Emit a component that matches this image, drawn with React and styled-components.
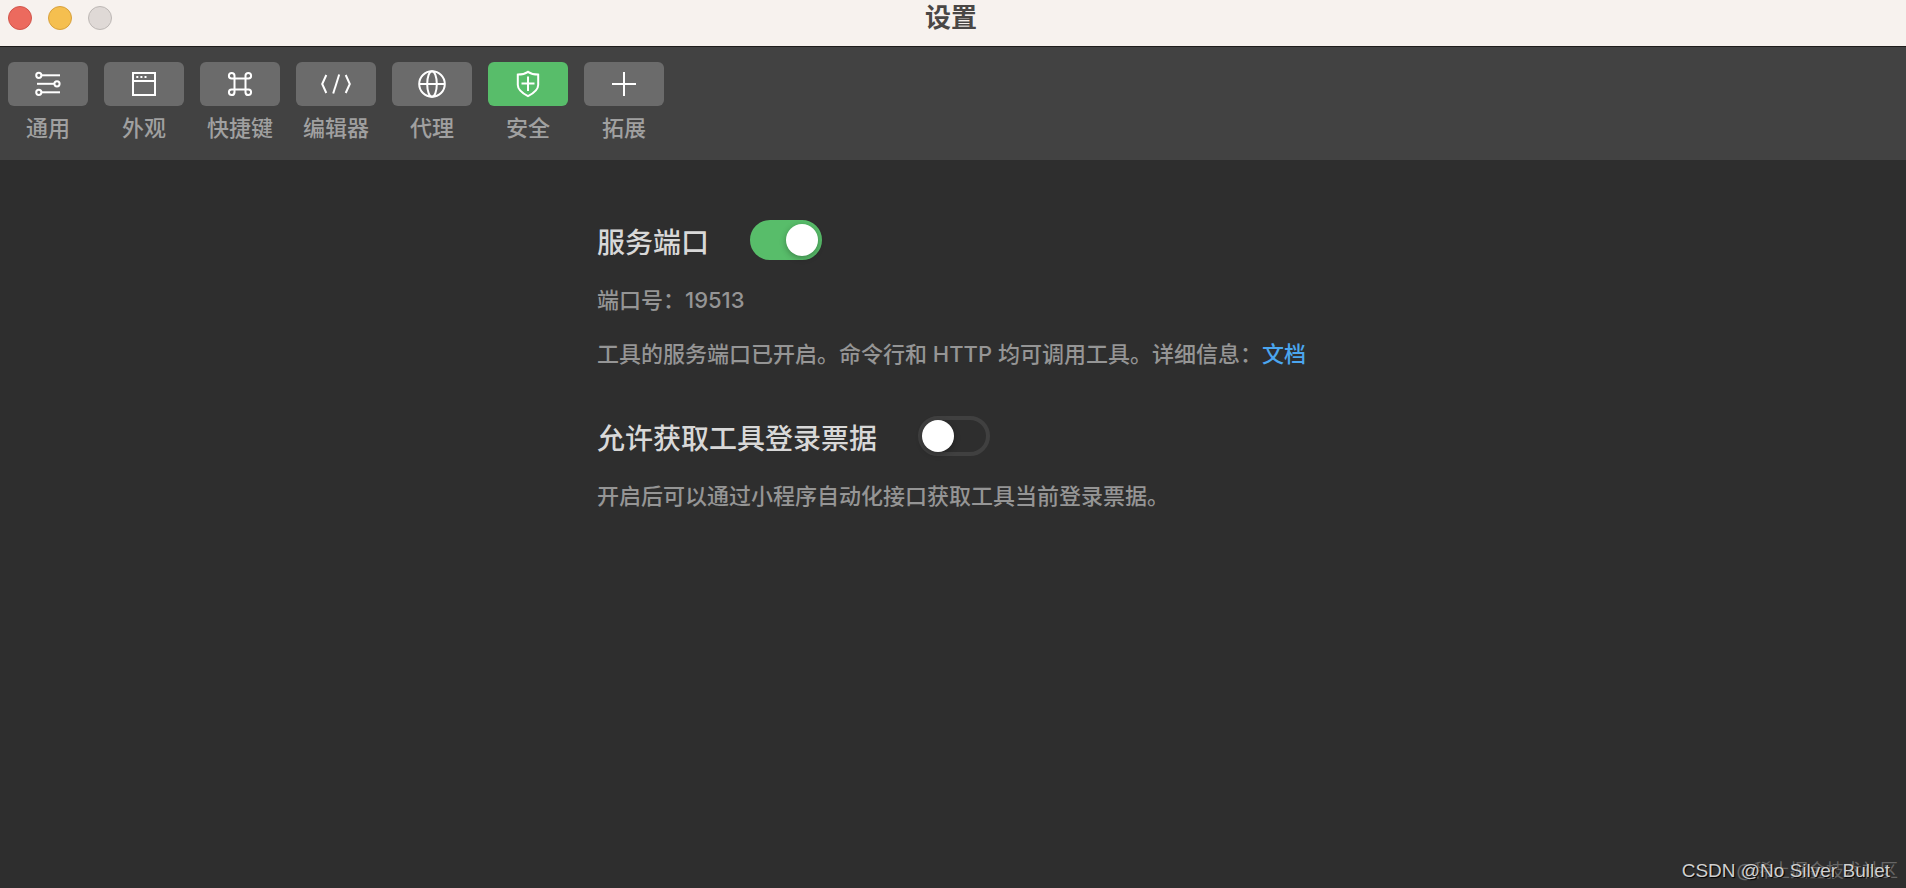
import React, { useState } from 'react'
import styled, { createGlobalStyle } from 'styled-components'

const tabs = [
  { id: 'general', label: '通用' },
  { id: 'appearance', label: '外观' },
  { id: 'shortcuts', label: '快捷键' },
  { id: 'editor', label: '编辑器' },
  { id: 'proxy', label: '代理' },
  { id: 'security', label: '安全' },
  { id: 'extensions', label: '拓展' },
]

const icons = {
  general: (
    <>
      <circle cx="4.8" cy="5.3" r="2.6" />
      <path d="M7.4 5.3H26" />
      <path d="M3 13.8h17.4" />
      <circle cx="23" cy="13.8" r="2.6" />
      <circle cx="4.8" cy="22.3" r="2.6" />
      <path d="M7.4 22.3H26" />
    </>
  ),
  appearance: (
    <>
      <path d="M3 3h22v22H3z" />
      <path d="M3 11h22" />
      <path d="M6.300 7h2M10.400 7h2M14.500 7h2" />
    </>
  ),
  shortcuts: (
    <path d="M8.500 8.500V5.600A2.800 2.800 0 1 0 5.600 8.500h16.800A2.800 2.800 0 1 0 19.500 5.600v16.800a2.800 2.800 0 1 0 2.900-2.900H5.600A2.800 2.800 0 1 0 8.500 22.400z" />
  ),
  editor: (
    <>
      <path d="M4.300 5L.2 14l4.100 9" />
      <path d="M17.200 4.500l-6 19" />
      <path d="M23.700 5l4.100 9-4.100 9" />
    </>
  ),
  proxy: (
    <>
      <circle cx="14" cy="14" r="12.8" />
      <ellipse cx="14" cy="14" rx="4.8" ry="12.8" />
      <path d="M1.2 14h25.6" />
    </>
  ),
  security: (
    <>
      <path d="M14 1.8c-3 2-6.500 2.700-10.200 2.800v10.400c0 5.200 5.300 8.600 10.200 11.200 4.900-2.600 10.200-6 10.200-11.200V4.600C20.500 4.500 17 3.800 14 1.800z" />
      <path d="M14 6.500v14.500M7.500 13.500h13" />
    </>
  ),
  extensions: <path d="M14 2v24M2 14h24" />,
}

const App = () => {
  const [active, setActive] = useState('security')
  const [port, setPort] = useState(true)
  const [ticket, setTicket] = useState(false)

  return (
    <>
      <GlobalStyle />
      <Window>
        <TitleBar>
          <Lights>
            <Light $color="#ec6a5e" $edge="#d2554b" aria-label="关闭" />
            <Light $color="#f5bf4f" $edge="#d8a13c" aria-label="最小化" />
            <Light $color="#dfd9d6" $edge="#bdb8b5" aria-label="缩放" />
          </Lights>
          <h1>设置</h1>
        </TitleBar>

        <Toolbar>
          {tabs.map((tab) => (
            <Tab key={tab.id} $active={tab.id === active} onClick={() => setActive(tab.id)}>
              <span className="icon">
                <svg viewBox="0 0 28 28" aria-hidden="true">{icons[tab.id]}</svg>
              </span>
              {tab.label}
            </Tab>
          ))}
        </Toolbar>

        <Content>
          <Section>
            <SwitchRow>
              <label htmlFor="port">服务端口</label>
              <Switch id="port" checked={port} onChange={(e) => setPort(e.target.checked)} />
            </SwitchRow>
            <p>端口号：19513</p>
            <p>
              工具的服务端口已开启。命令行和 HTTP 均可调用工具。详细信息：<a href="#docs">文档</a>
            </p>
          </Section>
          <Section>
            <SwitchRow>
              <label htmlFor="ticket">允许获取工具登录票据</label>
              <Switch id="ticket" checked={ticket} onChange={(e) => setTicket(e.target.checked)} />
            </SwitchRow>
            <p>开启后可以通过小程序自动化接口获取工具当前登录票据。</p>
          </Section>
        </Content>

        <SiteMark>@稀土掘金技术社区</SiteMark>
        <AuthorMark>CSDN @No Silver Bullet</AuthorMark>
      </Window>
    </>
  )
}

const GlobalStyle = createGlobalStyle`
  * {
    box-sizing: border-box;
  }
  body {
    margin: 0;
    background: #2e2e2e;
    font-family: Inter, 'Noto Sans CJK SC', sans-serif;
    font-weight: 500;
  }
  h1, p {
    margin: 0;
  }
  button {
    padding: 0;
    border: 0;
    background: none;
    font: inherit;
  }
`

const Window = styled.div`
  position: relative;
  min-height: 100vh;
`

const TitleBar = styled.header`
  display: grid;
  grid-template-columns: 1fr auto 1fr;
  height: 47px;
  padding: 0 12px 0 8px;
  background: #f7f2ee;
  border-bottom: 1px solid #1f1c1b;
  h1 {
    padding-top: 2px;
    color: #4a4745;
    font-size: 26px;
    line-height: 32px;
    font-weight: 700;
  }
`

const Lights = styled.div`
  display: flex;
  gap: 16px;
  padding-top: 6px;
`

const Light = styled.button`
  width: 24px;
  height: 24px;
  border-radius: 50%;
  background: ${(props) => props.$color};
  border: 1px solid ${(props) => props.$edge};
`

const Toolbar = styled.nav`
  display: flex;
  gap: 16px;
  height: 113px;
  padding: 15px 8px 0;
  background: #424242;
`

const Tab = styled.button`
  display: flex;
  flex-direction: column;
  align-items: center;
  gap: 6px;
  width: 80px;
  color: #a0a0a0;
  font-size: 22px;
  line-height: 32px;
  white-space: nowrap;
  .icon {
    display: grid;
    place-items: center;
    width: 80px;
    height: 44px;
    border-radius: 6px;
    background: ${(props) => (props.$active ? '#58bd6a' : '#6b6b6b')};
  }
  svg {
    width: 28px;
    height: 28px;
    overflow: visible;
    fill: none;
    stroke: #fff;
    stroke-width: 2;
  }
`

const Content = styled.main`
  display: flex;
  flex-direction: column;
  gap: 46px;
  max-width: 712px;
  margin: 0 auto;
  padding: 60px 0;
`

const Section = styled.section`
  p {
    margin-top: 24px;
    color: #959595;
    font-size: 22px;
    line-height: 32px;
  }
  p + p {
    margin-top: 22px;
  }
  a {
    color: #4ba6ef;
    text-decoration: none;
  }
`

const SwitchRow = styled.div`
  display: flex;
  align-items: center;
  gap: 41px;
  height: 40px;
  label {
    padding-top: 6px;
    color: #d8d8d8;
    font-size: 28px;
    line-height: 34px;
  }
`

const Switch = styled.input.attrs({ type: 'checkbox', role: 'switch' })`
  appearance: none;
  display: flex;
  width: 72px;
  height: 40px;
  margin: 0;
  border: 4px solid #404040;
  border-radius: 20px;
  &::before {
    content: '';
    width: 32px;
    height: 32px;
    border-radius: 50%;
    background: #fff;
    box-shadow: 0 2px 6px rgba(0, 0, 0, 0.3);
  }
  &:checked {
    justify-content: flex-end;
    background: #58bd6a;
    border-color: #58bd6a;
  }
`

const Mark = styled.span`
  position: absolute;
  bottom: 5px;
  line-height: 24px;
  font-weight: 400;
  white-space: nowrap;
  pointer-events: none;
`

const SiteMark = styled(Mark)`
  right: 8px;
  color: #666;
  font-size: 18px;
`

const AuthorMark = styled(Mark)`
  right: 16px;
  color: #d0d0d0;
  font-family: 'Liberation Sans', Arial, sans-serif;
  font-size: 19px;
  text-shadow: 1px 1px 1px #000;
`

export default App
